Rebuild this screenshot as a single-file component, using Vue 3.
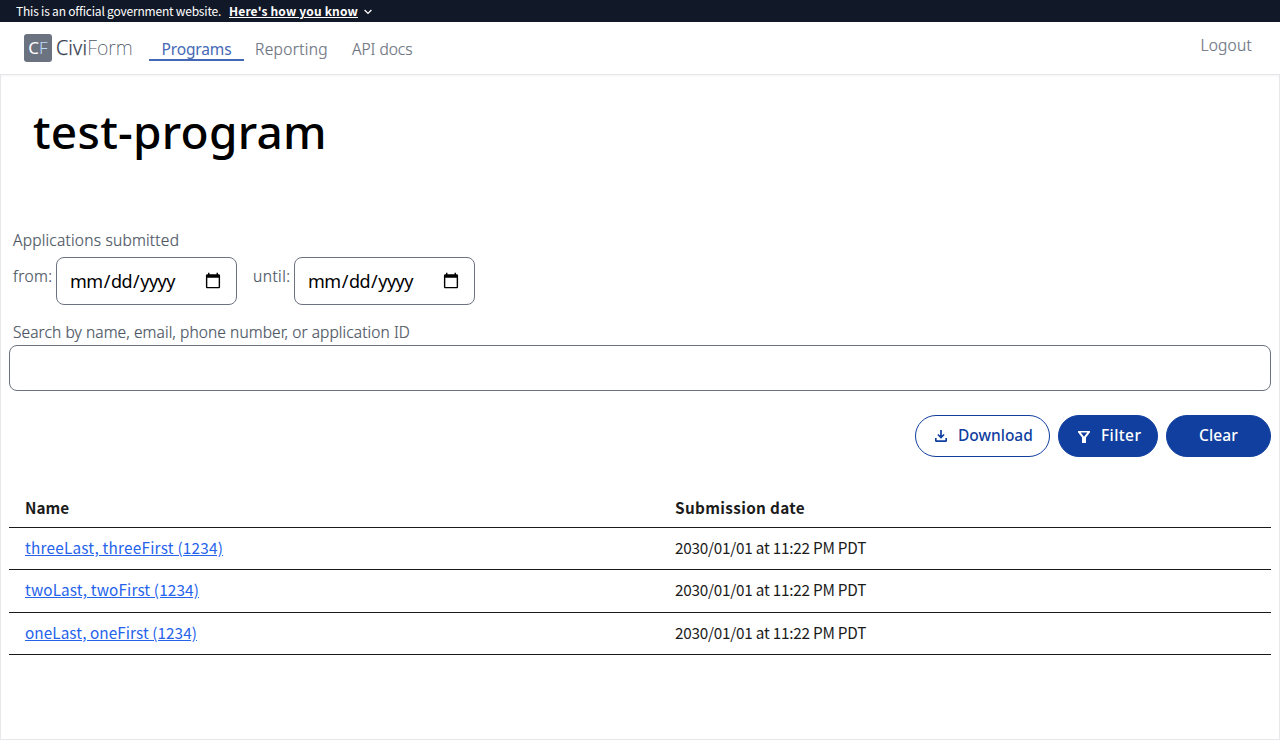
<script setup>
const rows = [
  { name: 'threeLast, threeFirst (1234)', cls: 'n3' },
  { name: 'twoLast, twoFirst (1234)', cls: 'n2' },
  { name: 'oneLast, oneFirst (1234)', cls: 'n1' },
]
</script>

<template>
  <div class="page">
    <div class="banner">
      <span class="gov">This is an official government website.</span>
      <a class="how">Here's how you know</a>
      <svg class="chev" width="8" height="6" viewBox="0 0 8 6"><path d="M0.6 1 4 4.4 7.4 1" fill="none" stroke="#fff" stroke-width="1.3" /></svg>
    </div>
    <header class="header">
      <div class="badge"><span>C</span><span class="thin">F</span></div>
      <div class="brand"><span>Civi</span><span class="form">Form</span></div>
      <nav class="nav">
        <a class="active"><span>Programs</span></a>
        <a class="rep">Reporting</a>
        <a class="api">API docs</a>
      </nav>
      <a class="logout">Logout</a>
    </header>
    <main class="main">
      <h1>test-program</h1>
      <div class="label submitted">Applications submitted</div>
      <div class="dates">
        <label class="label from">from:</label>
        <input type="date" />
        <label class="label until">until:</label>
        <input type="date" />
      </div>
      <label class="label search-label">Search by name, email, phone number, or application ID</label>
      <input class="search" type="text" />
      <div class="actions">
        <button class="btn outline">
          <svg width="12" height="12" viewBox="0 0 12 12" fill="none" stroke="currentColor" stroke-width="1.7"><path d="M6 0V7.2M2.9 4.5 6 7.6 9.1 4.5M.8 8V10.4Q.8 11.2 1.6 11.2H10.4Q11.2 11.2 11.2 10.4V8" /></svg>
          <span>Download</span>
        </button>
        <button class="btn filter">
          <svg width="12" height="12" viewBox="0 0 12 12"><path fill="currentColor" fill-rule="evenodd" d="M0 0H12V1.3L8 6.4V12H4V6.4L0 1.3ZM2.7 1.6 6 5.8 9.3 1.6Z" /></svg>
          <span>Filter</span>
        </button>
        <button class="btn clear"><span>Clear</span></button>
      </div>
      <table>
        <thead>
          <tr><th>Name</th><th class="sd">Submission date</th></tr>
        </thead>
        <tbody>
          <tr v-for="r in rows" :key="r.name">
            <td><a :class="r.cls">{{ r.name }}</a></td>
            <td class="date">2030/01/01 at 11:22 PM PDT</td>
          </tr>
        </tbody>
      </table>
    </main>
  </div>
</template>

<style>
body { background: #fff; }
</style>

<style scoped>
* { box-sizing: border-box; }
.page {
  height: 740px;
  display: flex;
  flex-direction: column;
  overflow: hidden;
  font-family: "Noto Sans", sans-serif;
}
.banner {
  height: 22px;
  padding-left: 16px;
  display: flex;
  align-items: center;
  background: #111827;
  color: #fff;
  font: 12px/22px "Noto Sans CJK SC", sans-serif;
  white-space: nowrap;
}
.gov { width: 213px; letter-spacing: -0.2px; }
.how { font-weight: 700; letter-spacing: 0.16px; text-decoration: underline; }
.chev { margin: 2px 0 0 6px; }
.header {
  height: 53px;
  padding: 0 28px 0 24px;
  display: flex;
  border-bottom: 1px solid #e5e7eb;
  box-shadow: 0 1px 2px rgba(0, 0, 0, .05);
  color: #6b7280;
}
.badge {
  width: 28px;
  height: 28px;
  margin-top: 12px;
  border-radius: 3px;
  background: #6b7280;
  color: #fff;
  font: 17px/28px "Noto Sans", sans-serif;
  display: flex;
  justify-content: center;
}
.thin { font-weight: 300; color: #bfdbfe; }
.brand {
  width: 76px;
  margin: 12px 0 0 4px;
  font-size: 19.5px;
  line-height: 28px;
  color: #374151;
  white-space: nowrap;
}
.brand span { font-weight: 300; letter-spacing: 0.2px; -webkit-text-stroke: 0.25px currentColor; }
.brand .form { font-weight: 200; color: #4b5563; letter-spacing: 0; -webkit-text-stroke: 0; }
.nav { display: flex; margin: 14px 0 0 17px; font-size: 15.5px; line-height: 26px; font-weight: 300; height: 25px; }
.nav a { height: 25px; white-space: nowrap; }
.active { width: 95px; text-align: center; color: #4468b5; font-weight: 400; border-bottom: 2px solid #4468b5; letter-spacing: -0.15px; }
.rep { width: 96px; padding-left: 11px; letter-spacing: 0.35px; -webkit-text-stroke: 0.2px currentColor; }
.api { padding-left: 12px; letter-spacing: 0; -webkit-text-stroke: 0.2px currentColor; }
.logout { margin: 11px 0 0 auto; font-size: 15.5px; line-height: 24px; font-weight: 300; letter-spacing: 0.25px; -webkit-text-stroke: 0.2px currentColor; }
.main {
  flex: 1;
  border: 1px solid #e5e7eb;
  border-top: 0;
  padding: 0 8px;
  display: flex;
  flex-direction: column;
}
h1 { margin: 32px 0 0 24px; font-size: 46px; line-height: 48px; font-weight: 500; letter-spacing: 0.25px; color: #000; white-space: nowrap; }
.label { color: #4b5563; font-size: 15.5px; line-height: 24px; font-weight: 300; white-space: nowrap; -webkit-text-stroke: 0.2px currentColor; }
.submitted { margin: 73px 0 0 4px; letter-spacing: 0.23px; }
.dates { display: flex; margin: 5px 0 0 4px; }
.from { width: 43px; margin-top: 7px; letter-spacing: 0.4px; }
.until { width: 41px; margin: 7px 0 0 16px; letter-spacing: 0.45px; }
input {
  border: 1px solid #6b7280;
  border-radius: 8px;
  background: #fff;
  color: #000;
  font: 18px/24px "Noto Sans", sans-serif;
}
.dates input { width: 181px; height: 48px; padding: 10px 12px; letter-spacing: -0.5px; }
.search-label { margin: 15px 0 0 4px; letter-spacing: 0.09px; }
.search { width: 100%; height: 46px; margin-top: 1px; padding: 10px 12px; flex: none; }
.actions { display: flex; justify-content: flex-end; gap: 8px; margin-top: 24px; }
.btn {
  height: 42px;
  padding: 0;
  display: flex;
  align-items: center;
  border: 1px solid #113f9f;
  border-radius: 21px;
  background: #113f9f;
  color: #fff;
  font: 500 15.5px/24px "Noto Sans", sans-serif;
}
.btn svg { margin-top: 2px; }
.btn span { margin-top: -2px; }
.outline { width: 135px; background: #fff; color: #113f9f; padding-left: 19px; }
.outline svg { margin: 0 11px 0 0; }
.filter { width: 100px; padding-left: 19px; }
.filter svg { margin-right: 11px; }
.filter span { letter-spacing: 0.4px; }
.clear { width: 105px; justify-content: center; letter-spacing: 0.15px; }
table {
  width: 1262px;
  margin-top: 32px;
  border-collapse: collapse;
  table-layout: fixed;
  font: 15.3px/24px "Noto Sans CJK SC", sans-serif;
  color: #1b1b1b;
}
th, td { height: 42px; padding: 0 16px 2px; text-align: left; border-bottom: 1px solid #1b1b1b; white-space: nowrap; }
th { height: 38px; font-weight: 700; }
tr:nth-child(2) td { height: 43px; padding-bottom: 3px; }
th:first-child { width: 650px; }
.sd { letter-spacing: 0.35px; }
td a { color: #2563eb; text-decoration: underline; }
.n3 { letter-spacing: 0.23px; }
.n2 { letter-spacing: 0.14px; }
.n1 { letter-spacing: 0.07px; }
.date { letter-spacing: -0.23px; }
</style>
